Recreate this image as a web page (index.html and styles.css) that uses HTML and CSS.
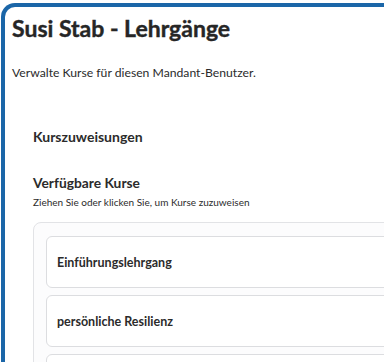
FILE: index.html
```html
<!DOCTYPE html>
<html lang="de">
<head>
<meta charset="utf-8">
<link rel="stylesheet" href="styles.css">
</head>
<body>
<div class="frame">
  <h1 class="title">Susi Stab - Lehrgänge</h1>
  <p class="subtitle">Verwalte Kurse für diesen Mandant-Benutzer.</p>
  <section class="assign">
    <h2 class="section-title">Kurszuweisungen</h2>
    <h3 class="list-title">Verfügbare Kurse</h3>
    <p class="hint">Ziehen Sie oder klicken Sie, um Kurse zuzuweisen</p>
    <div class="pool">
      <div class="course">Einführungslehrgang</div>
      <div class="course">persönliche Resilienz</div>
      <div class="course"></div>
    </div>
  </section>
</div>
</body>
</html>
```

FILE: styles.css
```css
html, body {
  margin: 0;
  padding: 0;
  background: #ffffff;
  overflow: hidden;
  width: 384px;
  height: 362px;
}
body {
  font-family: Lato, "Liberation Sans", sans-serif;
  color: #2b2b2b;
}
.frame {
  margin: 3px 0 0 1px;
  width: 500px;
  height: 500px;
  border: 4px solid #1b66a8;
  border-right: none;
  border-bottom: none;
  border-radius: 14px 0 0 0;
  padding: 0 0 0 7px;
  box-sizing: border-box;
}
.title {
  margin: 0;
  padding-top: 7px;
  font-size: 23px;
  font-weight: 700;
  line-height: 28px;
  color: #262626;
  -webkit-text-stroke: 0.4px #262626;
}
.subtitle {
  margin: 23px 0 0 0;
  font-size: 12.2px;
  line-height: 16px;
}
.assign {
  padding: 47px 0 0 21px;
}
.section-title {
  margin: 0;
  font-size: 14px;
  font-weight: 700;
  line-height: 18px;
}
.list-title {
  margin: 27px 0 0 0;
  font-size: 13.8px;
  font-weight: 700;
  line-height: 20px;
}
.hint {
  margin: 3px 0 0 0;
  font-size: 10px;
  line-height: 13px;
}
.pool {
  margin-top: 13px;
  border: 1px solid #e2e3e6;
  border-radius: 8px;
  background: #fcfcfd;
  padding: 13px 0 0 12px;
  display: flex;
  flex-direction: column;
  gap: 7px;
}
.course {
  height: 50px;
  border: 1px solid #dcdde0;
  border-radius: 6px;
  background: #ffffff;
  display: flex;
  align-items: center;
  padding-left: 10px;
  font-size: 12.5px;
  font-weight: 700;
  color: #2b2b2b;
}
```
